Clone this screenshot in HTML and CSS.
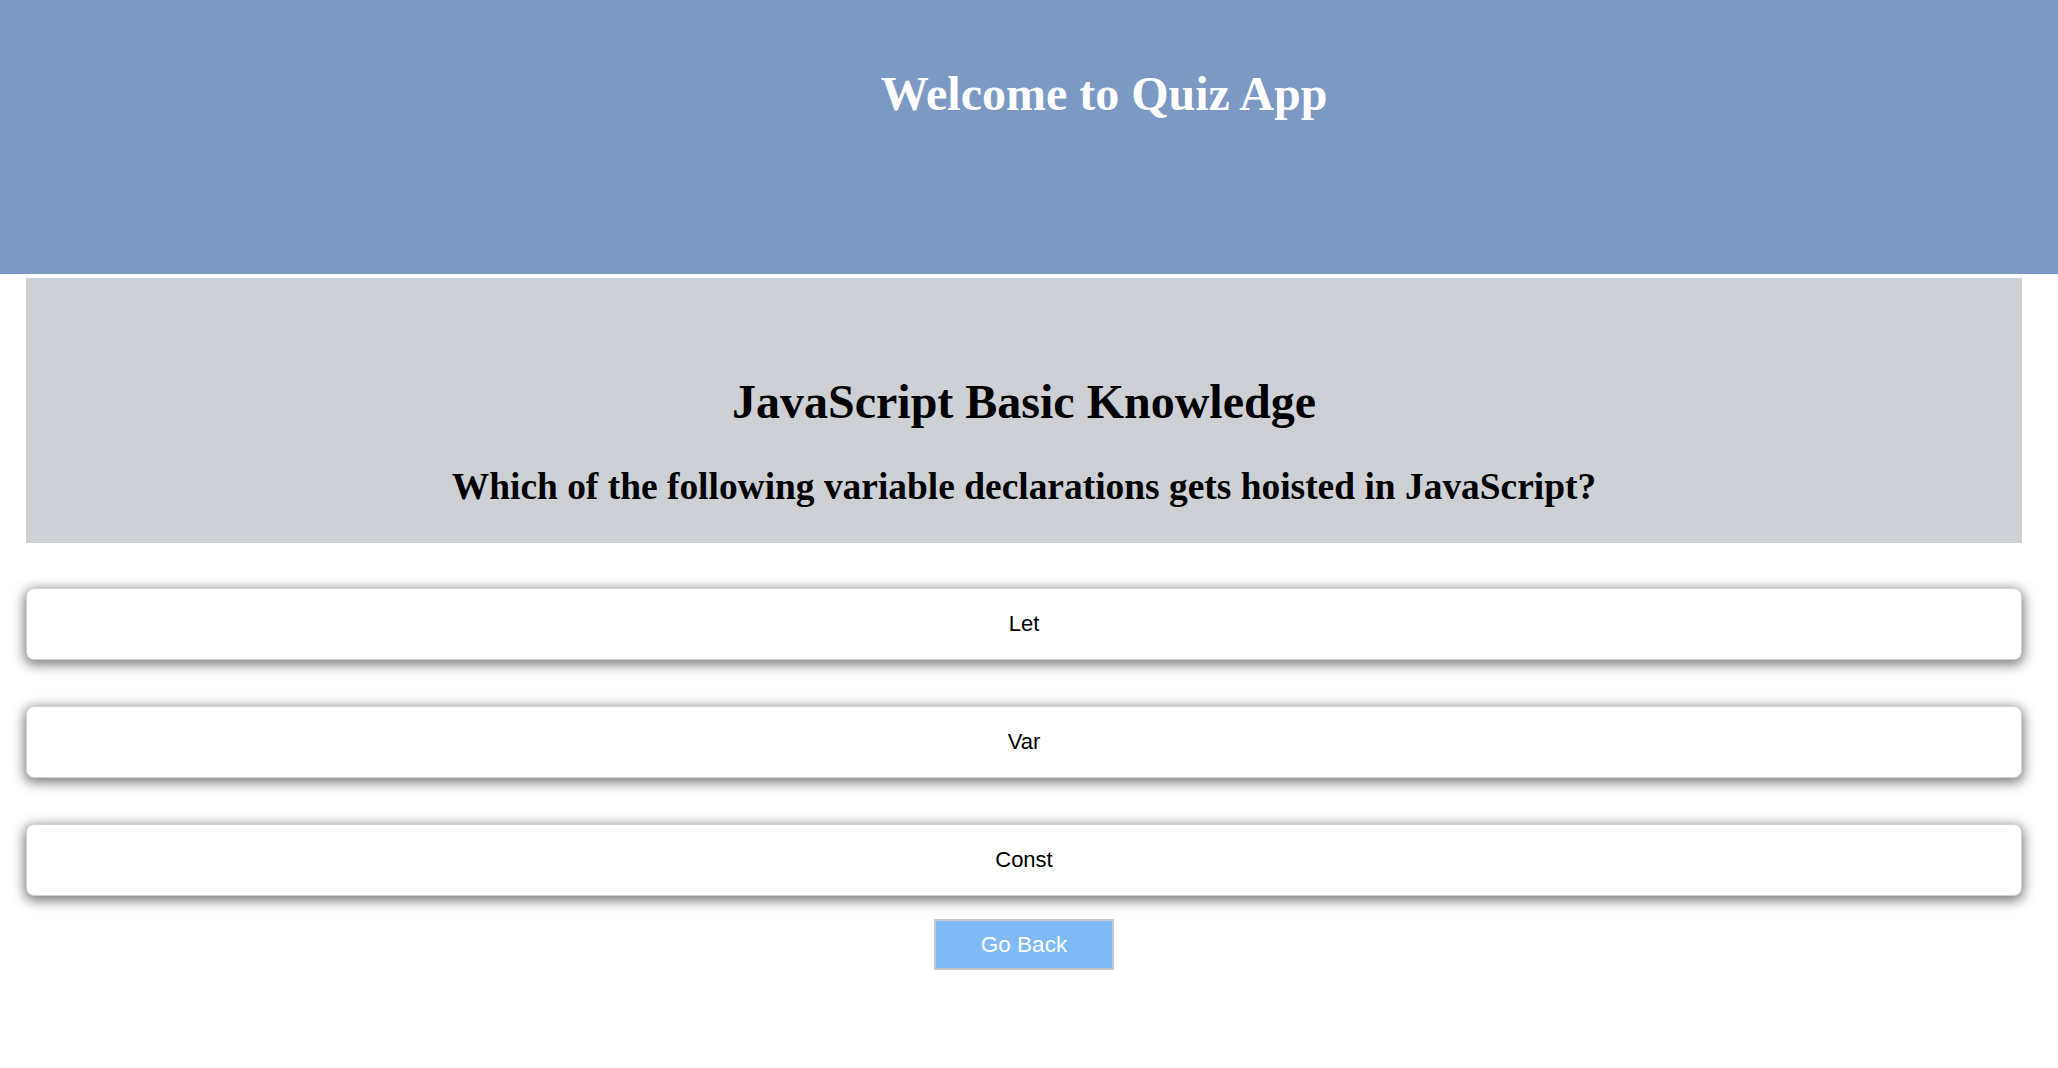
FILE: index.html
```html
<!DOCTYPE html>
<html lang="en">
<head>
<meta charset="utf-8">
<title>Quiz App</title>
<link rel="stylesheet" href="styles.css">
</head>
<body>
<header class="site-header">
  <h1 class="site-title">Welcome to Quiz App</h1>
</header>
<main class="quiz">
  <section class="quiz-card">
    <h2 class="quiz-topic">JavaScript Basic Knowledge</h2>
    <h3 class="quiz-question">Which of the following variable declarations gets hoisted in JavaScript?</h3>
  </section>
  <div class="answers">
    <button class="answer">Let</button>
    <button class="answer">Var</button>
    <button class="answer">Const</button>
  </div>
  <div class="actions">
    <button class="back-btn">Go Back</button>
  </div>
</main>
</body>
</html>
```

FILE: styles.css
```css
html, body {
  margin: 0;
  padding: 0;
  background: #ffffff;
}

body {
  font-family: "Liberation Serif", "Times New Roman", serif;
}

.site-header {
  box-sizing: border-box;
  height: 274px;
  padding: 66px 0 0 150px;
  background: #7b99c3;
  text-align: center;
}

.site-title {
  margin: 0;
  font-size: 48px;
  font-weight: bold;
  color: #ffffff;
}

.quiz {
  padding: 4px 36px 60px 26px;
}

.quiz-card {
  background: #cdd0d5;
  padding: 96px 0 35px;
  text-align: center;
  color: #000;
}

.quiz-topic {
  margin: 0 0 36px;
  font-size: 48px;
  font-weight: bold;
}

.quiz-question {
  margin: 0;
  font-size: 37.44px;
  font-weight: bold;
}

.answers {
  display: flex;
  flex-direction: column;
  gap: 46px;
  margin-top: 45px;
}

.answer {
  box-sizing: border-box;
  display: flex;
  align-items: center;
  justify-content: center;
  height: 72px;
  width: 100%;
  padding: 0;
  border: 1px solid #d2d2d2;
  border-radius: 8px;
  background: #ffffff;
  box-shadow: 0 3px 12px 2px rgba(0, 0, 0, 0.5);
  font-family: "Liberation Sans", Arial, sans-serif;
  font-size: 22px;
  color: #000;
}

.actions {
  display: flex;
  justify-content: center;
  margin-top: 23px;
}

.back-btn {
  box-sizing: border-box;
  width: 180px;
  height: 51px;
  padding: 0;
  border: 2px solid #c8c8c8;
  background: #80baf6;
  color: #ffffff;
  font-family: "Liberation Sans", Arial, sans-serif;
  font-size: 22.5px;
}
```
